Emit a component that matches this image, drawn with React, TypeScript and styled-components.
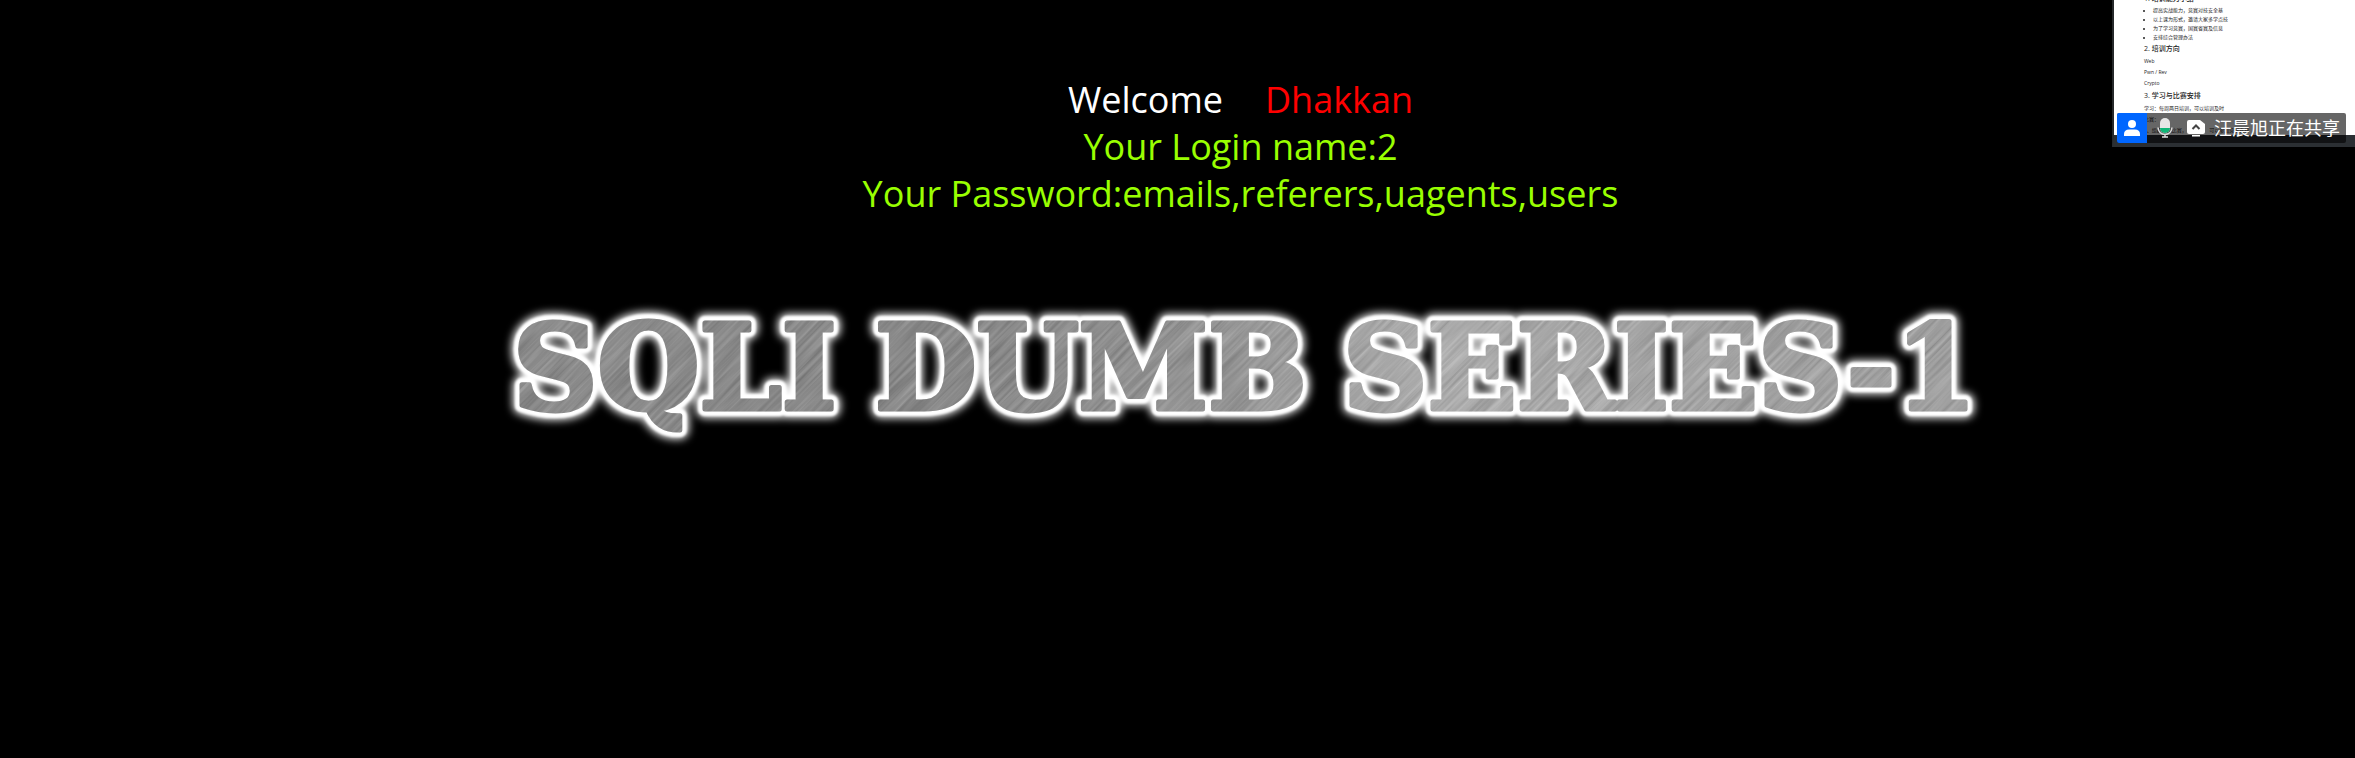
import React from "react";
import styled, { createGlobalStyle } from "styled-components";

const GlobalStyle = createGlobalStyle`
  html, body { margin: 0; background: #000; }
  body { font-family: "Open Sans", "Noto Sans CJK SC", sans-serif; }
`;

const Page = styled.main`
  position: relative;
  min-height: 100vh;
  box-sizing: border-box;
  padding: 76px 0 0 126px;
  overflow: hidden;
`;

const Messages = styled.section`
  text-align: center;
  font-size: 36px;
  line-height: 47px;
`;

const Line = styled.p<{ $color: string }>`
  margin: 0;
  color: ${(p) => p.$color};
`;

const Name = styled.span`
  color: #f00;
  margin-left: 42px;
`;

const Banner = styled.svg`
  display: block;
  width: 66%;
  margin: 84px auto 0;
  overflow: visible;
`;

const Word = styled.text`
  font-family: "DejaVu Serif", serif;
  font-weight: 700;
  font-size: 117px;
  stroke-linejoin: round;
`;

const SharePanel = styled.aside`
  position: absolute;
  top: 0;
  right: 0;
  width: 243px;
  height: 147px;
  box-sizing: border-box;
  border-left: 2px solid #25282a;
  border-bottom: 12px solid #2b2f33;
  background: #fff;
`;

const Doc = styled.div`
  height: 135px;
  overflow: hidden;
  padding-left: 30px;
  color: #222;
  white-space: nowrap;
`;

const DocHeading = styled.h2<{ $first?: boolean }>`
  margin: ${(p) => (p.$first ? "-6px 0 2px" : "2px 0")};
  font-size: 7px;
  line-height: 10px;
  font-weight: 500;
`;

const DocList = styled.ul`
  margin: 0;
  padding-left: 9px;
  font-size: 5px;
  line-height: 9px;
`;

const DocText = styled.p`
  margin: 0;
  font-size: 5px;
  line-height: 11px;
`;

const ShareBar = styled.div`
  position: absolute;
  left: 3px;
  top: 113px;
  width: 229px;
  height: 30px;
  display: flex;
  align-items: center;
  overflow: hidden;
  border-radius: 2px;
  background: rgba(0, 0, 0, 0.6);
  color: #fff;
  font-size: 18px;
  line-height: 30px;
  white-space: nowrap;
`;

const Avatar = styled.span`
  display: flex;
  width: 30px;
  height: 30px;
  align-items: center;
  justify-content: center;
  background: #06f;
`;

const Mic = styled.svg`
  margin-left: 10px;
`;

const Screen = styled.svg`
  margin: 0 9px 0 14px;
`;

const words = [
  { text: "SQLI", x: 8 },
  { text: "DUMB", x: 370 },
  { text: "SERIES-1", x: 838 },
];

const Words = (props: React.SVGProps<SVGGElement>) => (
  <g {...props}>
    {words.map((w) => (
      <Word key={w.text} x={w.x} y={108}>
        {w.text}
      </Word>
    ))}
  </g>
);

const Logo = () => (
  <Banner viewBox="0 0 1471 130" role="img" aria-label="SQLI DUMB SERIES-1">
    <defs>
      <linearGradient id="metal">
        <stop offset="0" stopColor="#8a8a8a" />
        <stop offset="0.2" stopColor="#848484" />
        <stop offset="0.35" stopColor="#868686" />
        <stop offset="0.5" stopColor="#969696" />
        <stop offset="0.62" stopColor="#b0b0b0" />
        <stop offset="0.8" stopColor="#a4a4a4" />
        <stop offset="1" stopColor="#9e9e9e" />
      </linearGradient>
      <filter id="glow" x="-5%" y="-50%" width="110%" height="200%">
        <feGaussianBlur stdDeviation="4" />
      </filter>
      <filter id="soft" x="-5%" y="-50%" width="110%" height="200%">
        <feGaussianBlur stdDeviation="1" />
      </filter>
      <filter id="brush" x="0" y="0" width="100%" height="100%" colorInterpolationFilters="sRGB">
        <feTurbulence type="fractalNoise" baseFrequency="0.012 0.3" numOctaves="3" seed="4" />
        <feColorMatrix values="1.2 0 0 0 0  1.2 0 0 0 0  1.2 0 0 0 0  0 0 0 0 1" />
      </filter>
      <mask id="letters" maskUnits="userSpaceOnUse" x="-20" y="-20" width="1511" height="190">
        <Words fill="#fff" stroke="#fff" strokeWidth="5" />
      </mask>
    </defs>
    <Words fill="#fff" stroke="#fff" strokeWidth="18" filter="url(#glow)" />
    <Words fill="#fff" stroke="#fff" strokeWidth="14" filter="url(#soft)" />
    <g mask="url(#letters)" aria-hidden="true">
      <rect x="-20" y="-20" width="1511" height="190" fill="url(#metal)" />
      <g opacity="0.18">
        <rect x="-200" y="-100" width="1700" height="1400" filter="url(#brush)" transform="rotate(-45)" />
      </g>
    </g>
  </Banner>
);

export default function App() {
  return (
    <>
      <GlobalStyle />
      <Page>
        <Messages>
          <Line $color="#fff">
            Welcome<Name>Dhakkan</Name>
          </Line>
          <Line $color="#9f0">Your Login name:2</Line>
          <Line $color="#9f0">Your Password:emails,referers,uagents,users</Line>
        </Messages>
        <Logo />
        <SharePanel>
          <Doc>
            <DocHeading $first>1. 培训能力小结</DocHeading>
            <DocList>
              <li>提高实战能力，竞赛对技安全基</li>
              <li>以上课为形式，邀请大家多学点技</li>
              <li>为了学习竞赛，国赛省赛及信息</li>
              <li>安排综合管理办法</li>
            </DocList>
            <DocHeading>2. 培训方向</DocHeading>
            <DocText>Web</DocText>
            <DocText>Pwn / Rev</DocText>
            <DocText>Crypto</DocText>
            <DocHeading>3. 学习与比赛安排</DocHeading>
            <DocText>学习：每周两日培训，可以培训及时</DocText>
            <DocText>比赛：</DocText>
            <DocText>1、组织参加比赛，　　　　　可以参加竞赛安排</DocText>
          </Doc>
          <ShareBar>
            <Avatar>
              <svg width="16" height="16" viewBox="0 0 16 16" fill="#fff">
                <circle cx="8" cy="4" r="4" />
                <path d="M0 16v-2c0-3 2-4.500 5-4.500h6c3 0 5 1.500 5 4.500v2z" />
              </svg>
            </Avatar>
            <Mic width="16" height="20" viewBox="0 0 16 20">
              <rect x="3" y="0" width="10" height="15" rx="5" fill="#e6e6e6" />
              <path d="M3 10h10a5 5 0 0 1-10 0z" fill="#0fb576" />
              <path d="M1 9.500a7 7 0 0 0 14 0M8 16.500V19M5 19h6" fill="none" stroke="#ddd" strokeWidth="1.500" />
            </Mic>
            <Screen width="18" height="17" viewBox="0 0 18 17">
              <path d="M2 0h11l5 4v8a2 2 0 0 1-2 2H2a2 2 0 0 1-2-2V2a2 2 0 0 1 2-2z" fill="#fff" />
              <path d="M5 15h8v1.500H5z" fill="#fff" />
              <path d="M5.500 9L9 5.500 12.500 9" fill="none" stroke="#444" strokeWidth="2" />
            </Screen>
            汪晨旭正在共享
          </ShareBar>
        </SharePanel>
      </Page>
    </>
  );
}
